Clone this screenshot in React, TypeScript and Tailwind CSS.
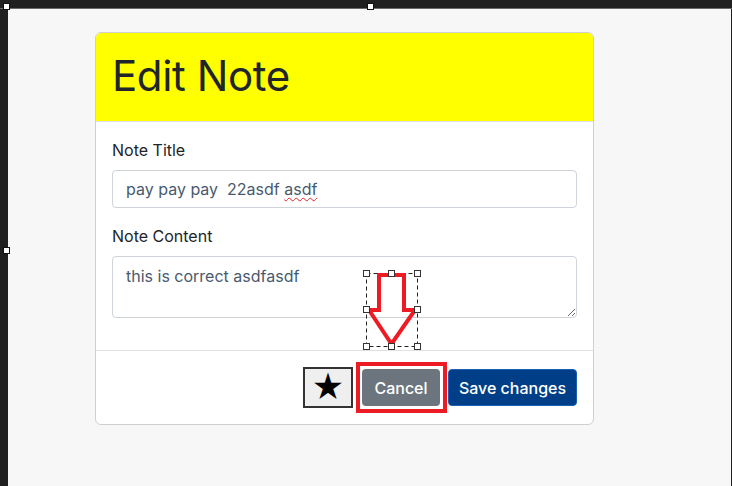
import React from "react";

const font = { fontFamily: "Inter, 'Noto Sans', sans-serif" };

// selection handles of the annotation tool: [x, y]
const arrowHandles: [number, number][] = [
  [366, 273], [391, 273], [417, 273],
  [366, 309], [417, 309],
  [366, 346], [391, 346], [417, 346],
];
const frameHandles: [number, number][] = [
  [6, 6], [370, 6], [6, 250],
];

/** Red "look here" arrow plus tool handles, drawn over the screenshot. */
function Annotations() {
  return (
    <svg className="pointer-events-none absolute inset-0" width={732} height={486} viewBox="0 0 732 486">
      <rect x={366.5} y={273.5} width={51} height={73} fill="none" stroke="#222" strokeDasharray="4 3" />
      <polygon
        points="379,275 404,275 404,310 415,310 391.5,344 369,310 379,310"
        fill="none"
        stroke="#ed1c24"
        strokeWidth={4}
      />
      {arrowHandles.map(([x, y], i) => (
        <rect key={i} x={x - 2.5} y={y - 2.5} width={6} height={6} fill="#fff" stroke="#333" />
      ))}
      {frameHandles.map(([x, y], i) => (
        <rect key={i} x={x - 2.5} y={y - 2.5} width={6} height={6} fill="#fff" stroke="#111" />
      ))}
    </svg>
  );
}

export default function App() {
  return (
    <div className="relative h-[486px] w-[732px] overflow-hidden bg-[#202020]" style={font}>
      {/* screenshot frame */}
      <div className="h-[9px] border-b border-[#6a6a6a] bg-[#202020]" />
      <div className="flex h-[477px]">
        <div className="w-[8px] bg-[#202020]" />
        <div className="flex-1 bg-[#f7f7f7] pl-[87px] pt-[23px]">
          <div className="w-[499px] overflow-hidden rounded-md border border-[#cfcfcf] bg-white">
            <div className="flex h-[89px] items-center border-b border-[#dee2e6] bg-[#ffff00] px-4">
              <h1 className="pb-[2px] text-[42px] font-normal leading-none tracking-[-0.4px] text-[#212529]">
                Edit Note
              </h1>
            </div>

            <div className="p-4 text-[16px] text-[#212529]">
              <div className="mb-4">
                <label className="mb-2 block leading-6">Note Title</label>
                <div className="flex h-[38px] items-center rounded border border-[#ced4da] bg-white px-[13px] text-[#495a6e]">
                  <span className="whitespace-pre">
                    pay pay pay  22asdf{" "}
                    <span className="underline decoration-[#e0262e] decoration-wavy decoration-1 underline-offset-2">
                      asdf
                    </span>
                  </span>
                </div>
              </div>
              <div className="mb-4">
                <label className="mb-2 block leading-6">Note Content</label>
                <textarea
                  readOnly
                  spellCheck={false}
                  defaultValue="this is correct asdfasdf"
                  className="block h-[62px] w-full rounded border border-[#ced4da] bg-white px-[13px] py-[7px] text-[#495a6e] outline-none"
                  style={font}
                />
              </div>
            </div>

            <div className="flex h-[74px] items-center justify-end border-t border-[#dee2e6] pr-4">
              <button className="flex h-[41px] w-[50px] items-center justify-center border-2 border-[#333] bg-[#efefef] text-[32px] leading-none text-black">
                ★
              </button>
              <div className="ml-[3px] border-4 border-[#ed1c24] py-[3px] pl-[2px] pr-[3px]">
                <button className="h-[37px] w-[78px] rounded bg-[#6c757d] text-[16px] font-medium text-white">
                  Cancel
                </button>
              </div>
              <button className="ml-px h-[37px] w-[129px] rounded border border-[#1a5fb4] bg-[#003f87] text-[16px] font-medium text-white">
                Save changes
              </button>
            </div>
          </div>
        </div>
        <div className="w-px bg-[#202020]" />
      </div>

      <Annotations />
    </div>
  );
}
